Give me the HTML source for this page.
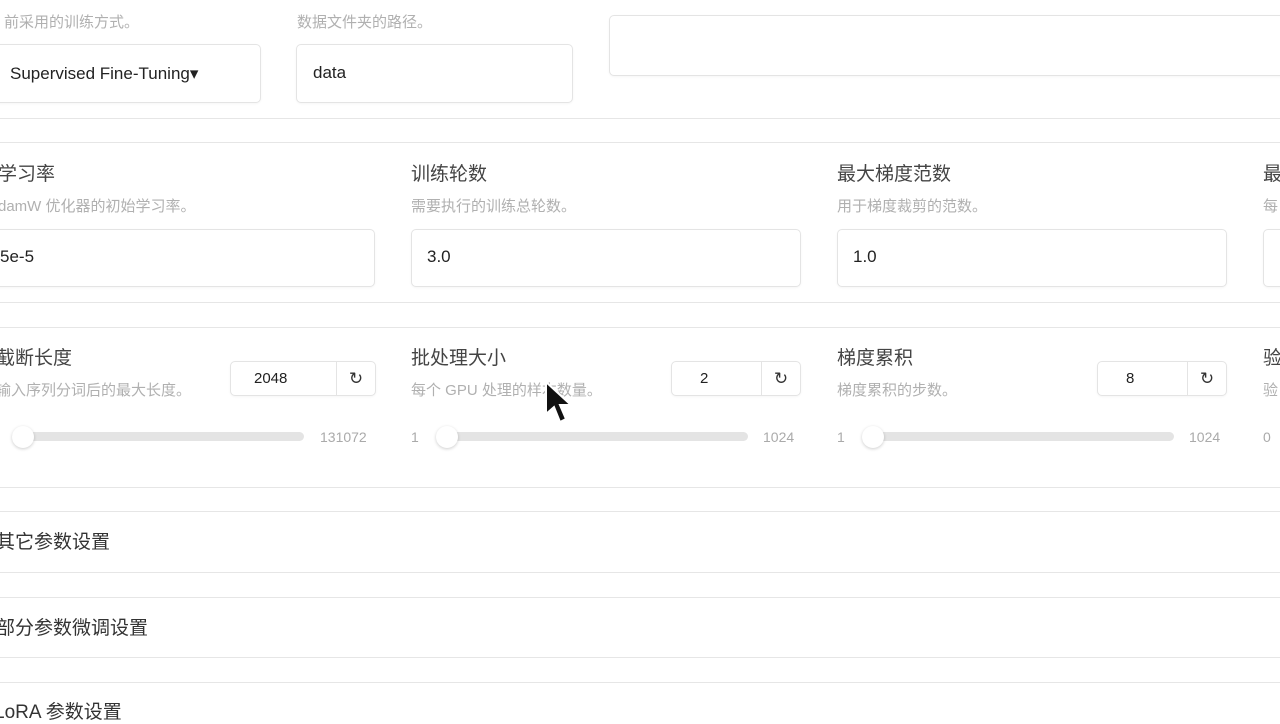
<!DOCTYPE html>
<html><head><meta charset="utf-8"><style>
body{margin:0;width:1280px;height:720px;overflow:hidden;background:#fff;font-family:"Liberation Sans","Noto Sans CJK SC",sans-serif;position:relative}
.a{position:absolute;white-space:nowrap}
.lbl{font-size:19px;color:#444}
.sub{font-size:15px;color:#b0b0b0}
.box{position:absolute;border:1px solid #e4e4e4;border-radius:5px;background:#fff;box-shadow:0 1px 2px rgba(0,0,0,.04)}
.val{font-size:17px;color:#222}
.hl{position:absolute;left:0;width:1280px;height:1px;background:#e6e6e6}
.track{position:absolute;height:9px;background:#e4e4e4;border-radius:5px}
.knob{position:absolute;width:22px;height:22px;border-radius:50%;background:#fff;box-shadow:0 1px 3px rgba(0,0,0,.2)}
.num{font-size:14px;color:#aaa}
.sec{font-size:19px;color:#333}
.rst{position:absolute;border-left:1px solid #e4e4e4;width:38px;top:0;bottom:0;right:0;text-align:center;line-height:34px;font-size:17px;color:#333}
</style></head><body>
<div class="a sub" style="left:4px;top:11px">前采用的训练方式。</div>
<div class="a sub" style="left:297px;top:11px">数据文件夹的路径。</div>
<div class="box" style="left:-5px;top:44px;width:264px;height:57px"></div>
<div class="a val" style="left:10px;top:64px">Supervised Fine-Tuning▾</div>
<div class="box" style="left:296px;top:44px;width:275px;height:57px"></div>
<div class="a val" style="left:313px;top:63px">data</div>
<div class="box" style="left:609px;top:15px;width:690px;height:59px"></div>
<div class="hl" style="top:118px"></div>
<div class="hl" style="top:142px"></div>

<div class="a lbl" style="left:-2px;top:159px">学习率</div>
<div class="a sub" style="left:-2px;top:195px">damW 优化器的初始学习率。</div>
<div class="box" style="left:-5px;top:229px;width:378px;height:56px"></div>
<div class="a val" style="left:0px;top:247px">5e-5</div>
<div class="a lbl" style="left:411px;top:159px">训练轮数</div>
<div class="a sub" style="left:411px;top:195px">需要执行的训练总轮数。</div>
<div class="box" style="left:411px;top:229px;width:388px;height:56px"></div>
<div class="a val" style="left:427px;top:247px">3.0</div>
<div class="a lbl" style="left:837px;top:159px">最大梯度范数</div>
<div class="a sub" style="left:837px;top:195px">用于梯度裁剪的范数。</div>
<div class="box" style="left:837px;top:229px;width:388px;height:56px"></div>
<div class="a val" style="left:853px;top:247px">1.0</div>
<div class="a lbl" style="left:1263px;top:159px">最</div>
<div class="a sub" style="left:1263px;top:195px">每</div>
<div class="box" style="left:1263px;top:229px;width:60px;height:56px"></div>
<div class="hl" style="top:302px"></div>
<div class="hl" style="top:327px"></div>

<div class="a lbl" style="left:-4px;top:343px">截断长度</div>
<div class="a sub" style="left:-4px;top:379px">输入序列分词后的最大长度。</div>
<div class="box" style="left:230px;top:361px;width:144px;height:33px"><div class="a" style="left:23px;top:8px;font-size:15px;color:#222">2048</div><div class="rst">↻</div></div>
<div class="track" style="left:12px;top:432px;width:292px"></div>
<div class="knob" style="left:12px;top:426px"></div>
<div class="a num" style="left:320px;top:429px">131072</div>

<div class="a lbl" style="left:411px;top:343px">批处理大小</div>
<div class="a sub" style="left:411px;top:379px">每个 GPU 处理的样本数量。</div>
<div class="box" style="left:671px;top:361px;width:128px;height:33px"><div class="a" style="left:28px;top:8px;font-size:15px;color:#222">2</div><div class="rst">↻</div></div>
<div class="a num" style="left:411px;top:429px">1</div>
<div class="track" style="left:438px;top:432px;width:310px"></div>
<div class="knob" style="left:436px;top:426px"></div>
<div class="a num" style="left:763px;top:429px">1024</div>

<div class="a lbl" style="left:837px;top:343px">梯度累积</div>
<div class="a sub" style="left:837px;top:379px">梯度累积的步数。</div>
<div class="box" style="left:1097px;top:361px;width:128px;height:33px"><div class="a" style="left:28px;top:8px;font-size:15px;color:#222">8</div><div class="rst">↻</div></div>
<div class="a num" style="left:837px;top:429px">1</div>
<div class="track" style="left:864px;top:432px;width:310px"></div>
<div class="knob" style="left:862px;top:426px"></div>
<div class="a num" style="left:1189px;top:429px">1024</div>
<div class="a lbl" style="left:1263px;top:343px">验</div>
<div class="a sub" style="left:1263px;top:379px">验</div>
<div class="a num" style="left:1263px;top:429px">0</div>

<div class="hl" style="top:487px"></div>
<div class="hl" style="top:511px"></div>
<div class="a sec" style="left:-4px;top:527px">其它参数设置</div>
<div class="hl" style="top:572px"></div>
<div class="hl" style="top:597px"></div>
<div class="a sec" style="left:-4px;top:613px">部分参数微调设置</div>
<div class="hl" style="top:657px"></div>
<div class="hl" style="top:682px"></div>
<div class="a sec" style="left:-6px;top:697px">LoRA 参数设置</div>
<svg class="a" style="left:544px;top:380px" width="30" height="50" viewBox="0 0 30 50"><path d="M2 2 L2 34 L10 27 L16 42 L22 39 L16 25 L27 25 Z" fill="#111" stroke="#fff" stroke-width="2"/></svg>
</body></html>
